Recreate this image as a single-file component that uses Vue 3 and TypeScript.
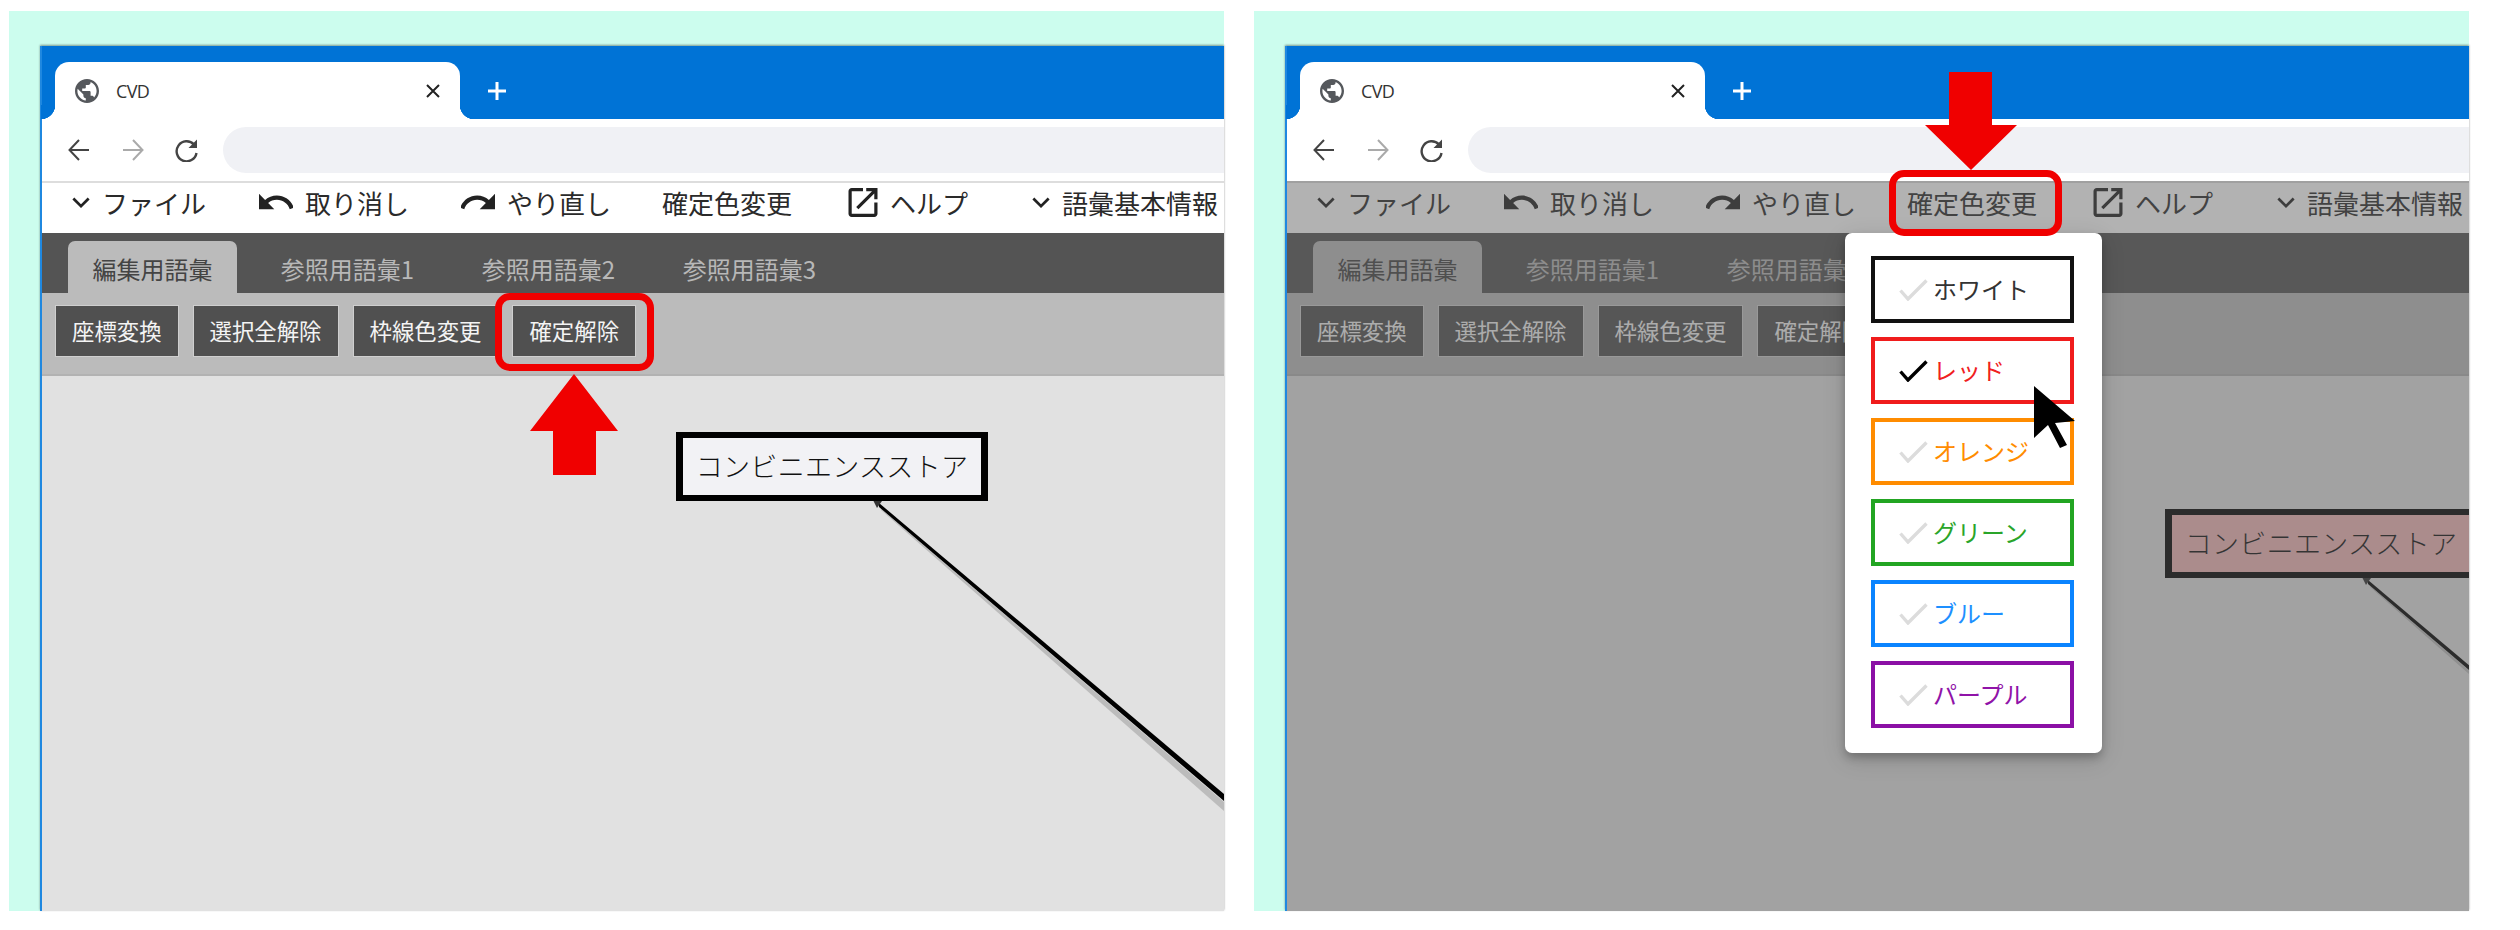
<script setup lang="ts">
interface Panel {
  id: string
  dimmed: boolean
  boxLeft: number
  boxTop: number
  boxFill: string
}

const panels: Panel[] = [
  { id: 'before', dimmed: false, boxLeft: 634, boxTop: 56, boxFill: '#f2f2f5' },
  { id: 'after', dimmed: true, boxLeft: 878, boxTop: 133, boxFill: '#f2b7b7' },
]

const subTabs = ['参照用語彙1', '参照用語彙2', '参照用語彙3']
const actions = ['座標変換', '選択全解除', '枠線色変更', '確定解除']

const colors = [
  { label: 'ホワイト', border: '#111111', text: '#333333', checked: false },
  { label: 'レッド', border: '#f01c1c', text: '#f02020', checked: true },
  { label: 'オレンジ', border: '#ff8c00', text: '#ff8c00', checked: false },
  { label: 'グリーン', border: '#22a522', text: '#2aa52a', checked: false },
  { label: 'ブルー', border: '#0a84ff', text: '#1e90ff', checked: false },
  { label: 'パープル', border: '#8b10a5', text: '#9013a8', checked: false },
]

// 引き出し線はボックス左下からの相対座標で、先端に向かって細くなる
function leaderLine(p: Panel) {
  const x = p.boxLeft + 197
  const y = p.boxTop + 68
  return `${x + 6},${y + 3} ${x + 6},${y + 7} ${x + 351},${y + 301} ${x + 351},${y + 294}`
}
function leaderShadow(p: Panel) {
  const x = p.boxLeft + 197
  const y = p.boxTop + 68
  return `${x + 8},${y + 9} ${x + 8},${y + 10} ${x + 351},${y + 311} ${x + 351},${y + 302}`
}
function leaderHead(p: Panel) {
  const x = p.boxLeft + 197
  const y = p.boxTop + 68
  return `${x},${y} ${x + 9},${y + 1} ${x + 4},${y + 8}`
}
</script>

<template>
  <div class="page">
    <section v-for="panel in panels" :key="panel.id" class="panel">
      <div class="window">
        <div class="tabstrip">
          <div class="browser-tab">
            <svg class="globe" viewBox="2 2 20 20">
              <path fill="#55585c" d="M12 2C6.48 2 2 6.48 2 12s4.48 10 10 10 10-4.48 10-10S17.52 2 12 2zm-1 17.93c-3.95-.49-7-3.85-7-7.93 0-.62.08-1.21.21-1.79L9 15v1c0 1.1.9 2 2 2v1.93zm6.9-2.54c-.26-.81-1-1.39-1.9-1.39h-1v-3c0-.55-.45-1-1-1H8v-2h2c.55 0 1-.45 1-1V7h2c1.1 0 2-.9 2-2v-.41c2.93 1.19 5 4.06 5 7.41 0 2.08-.8 3.97-2.1 5.39z" />
            </svg>
            <span class="tab-title">CVD</span>
            <svg class="tab-close" viewBox="0 0 14 14">
              <path d="M1 1L13 13M13 1L1 13" stroke="#222" stroke-width="2" />
            </svg>
          </div>
          <svg class="new-tab" viewBox="0 0 20 20">
            <path d="M10 1V19M1 10H19" stroke="#fff" stroke-width="3" />
          </svg>
        </div>

        <div class="toolbar">
          <svg class="nav-icon" viewBox="0 0 24 24">
            <path d="M22 12H3M12 2L2.5 12L12 22" fill="none" stroke="#444" stroke-width="2" />
          </svg>
          <svg class="nav-icon" viewBox="0 0 24 24">
            <path d="M2 12H21M12 2L21.5 12L12 22" fill="none" stroke="#aaa" stroke-width="2" />
          </svg>
          <svg class="nav-icon" viewBox="0 0 24 24">
            <path d="M19 6.5A10 10 0 1 0 21.5 15" fill="none" stroke="#444" stroke-width="2.4" />
            <path d="M22 1.5V10H13.5Z" fill="#444" />
          </svg>
          <div class="address"></div>
        </div>

        <div class="menubar">
          <div class="menu-item">
            <svg class="chevron" viewBox="0 0 20 12"><path d="M1.5 1.5L10 10L18.5 1.5" fill="none" stroke="#222" stroke-width="3" /></svg>
            <span>ファイル</span>
          </div>
          <div class="menu-item">
            <svg class="undo" viewBox="2 6.6 20 11"><path fill="#222" d="M12.5 8c-2.65 0-5.05.99-6.9 2.6L2 7v9h9l-3.62-3.62c1.39-1.16 3.16-1.88 5.12-1.88 3.54 0 6.55 2.31 7.6 5.5l2.37-.78C21.08 11.03 17.15 8 12.5 8z" /></svg>
            <span>取り消し</span>
          </div>
          <div class="menu-item">
            <svg class="undo" viewBox="2 6.6 20 11"><path fill="#222" d="M18.4 10.6C16.55 8.99 14.15 8 11.5 8c-4.65 0-8.58 3.03-9.96 7.22L3.9 16c1.05-3.19 4.05-5.5 7.6-5.5 1.95 0 3.73.72 5.12 1.88L13 16h9V7l-3.6 3.6z" /></svg>
            <span>やり直し</span>
          </div>
          <div class="menu-item">
            <span>確定色変更</span>
          </div>
          <div class="menu-item">
            <svg class="help" viewBox="3 3 18 18"><path fill="#222" d="M19 19H5V5h7V3H5c-1.11 0-2 .9-2 2v14c0 1.1.89 2 2 2h14c1.1 0 2-.9 2-2v-7h-2v7zM14 3v2h3.59l-9.83 9.83 1.41 1.41L19 6.41V10h2V3h-7z" /></svg>
            <span>ヘルプ</span>
          </div>
          <div class="menu-item">
            <svg class="chevron" viewBox="0 0 20 12"><path d="M1.5 1.5L10 10L18.5 1.5" fill="none" stroke="#222" stroke-width="3" /></svg>
            <span>語彙基本情報</span>
          </div>
        </div>

        <div class="subtabs">
          <div class="subtab active">編集用語彙</div>
          <div v-for="t in subTabs" :key="t" class="subtab">{{ t }}</div>
        </div>

        <div class="actions">
          <button v-for="a in actions" :key="a" class="action" type="button">{{ a }}</button>
        </div>

        <div class="canvas">
          <svg class="leader" width="1182" height="535">
            <polygon :points="leaderShadow(panel)" fill="#bcbcbc" />
            <polygon :points="leaderLine(panel)" fill="#000" />
            <polygon :points="leaderHead(panel)" fill="#333" />
          </svg>
          <div
            class="term-box"
            :style="{ left: panel.boxLeft + 'px', top: panel.boxTop + 'px', background: panel.boxFill }"
          >コンビニエンスストア</div>
        </div>

        <template v-if="panel.dimmed">
          <div class="scrim"></div>
          <div class="dropdown">
            <div
              v-for="c in colors"
              :key="c.label"
              class="color-item"
              :style="{ borderColor: c.border, color: c.text }"
            >
              <svg class="check" viewBox="0 0 29 22">
                <path d="M1.5 11.5L9 20L27.5 1.5" fill="none" :stroke="c.checked ? '#000' : '#dcdcdc'" stroke-width="3.4" />
              </svg>
              <span class="color-label">{{ c.label }}</span>
            </div>
          </div>
          <svg class="cursor" viewBox="0 0 41 62">
            <polygon points="0,0 41,35 21,37 33,59 26,62 14,39 0,52" fill="#000" />
          </svg>
          <div class="callout callout-menu"></div>
          <svg class="arrow arrow-down" viewBox="0 0 92 98">
            <polygon points="24,0 67,0 67,53 92,53 46,98 0,53 24,53" fill="#f00000" />
          </svg>
        </template>
        <template v-else>
          <div class="callout callout-action"></div>
          <svg class="arrow arrow-up" viewBox="0 0 88 101">
            <polygon points="44,0 88,57 66,57 66,101 23,101 23,57 0,57" fill="#f00000" />
          </svg>
        </template>
      </div>
    </section>
  </div>
</template>

<style scoped>
.page {
  display: flex;
  gap: 30px;
  width: 2520px;
  height: 930px;
  box-sizing: border-box;
  padding: 11px 0 19px 9px;
  overflow: hidden;
  background: #fff;
  font-family: "Noto Sans CJK JP", "Noto Sans", sans-serif;
  color: #2a2a2a;
}

.panel {
  width: 1215px;
  height: 900px;
  box-sizing: border-box;
  padding: 35px 0 0 31px;
  background: #ccfdee;
}

.window {
  position: relative;
  display: flex;
  flex-direction: column;
  height: 100%;
  border-left: 2px solid #1f88e0;
  background: #fff;
  box-shadow: 0 -1px 2px rgba(0, 0, 0, 0.4);
}

.tabstrip {
  display: flex;
  align-items: flex-end;
  height: 73px;
  flex: none;
  box-sizing: border-box;
  padding-left: 13px;
  background: #0073d6;
}

.browser-tab {
  position: relative;
  display: flex;
  align-items: center;
  width: 405px;
  height: 57px;
  box-sizing: border-box;
  padding: 0 20px;
  background: #fff;
  border-radius: 14px 14px 0 0;
}

.browser-tab::before,
.browser-tab::after {
  content: "";
  position: absolute;
  bottom: 0;
  width: 14px;
  height: 14px;
}

.browser-tab::before {
  left: -14px;
  background: radial-gradient(circle at 0 0, #0073d6 14px, #fff 14.5px);
}

.browser-tab::after {
  right: -14px;
  background: radial-gradient(circle at 100% 0, #0073d6 14px, #fff 14.5px);
}

.globe {
  width: 24px;
  height: 24px;
  flex: none;
}

.tab-title {
  margin-left: 17px;
  font-family: "Open Sans", sans-serif;
  font-size: 18px;
  letter-spacing: -0.6px;
  color: #333;
}

.tab-close {
  width: 14px;
  height: 14px;
  margin-left: auto;
}

.new-tab {
  width: 20px;
  height: 20px;
  margin: 0 0 18px 27px;
}

.toolbar {
  display: flex;
  align-items: center;
  gap: 30px;
  height: 62px;
  flex: none;
  box-sizing: border-box;
  padding-left: 25px;
}

.nav-icon {
  width: 24px;
  height: 24px;
  flex: none;
}

.address {
  flex: 1;
  height: 46px;
  margin-left: -6px;
  border-radius: 23px 0 0 23px;
  background: #f0f1f5;
}

.menubar {
  display: flex;
  align-items: center;
  gap: 52px;
  height: 52px;
  flex: none;
  box-sizing: border-box;
  padding: 0 0 11px 30px;
  border-top: 2px solid #dddddd;
  font-size: 26px;
  white-space: nowrap;
}

.menu-item {
  display: flex;
  align-items: center;
  gap: 12px;
  line-height: 1;
}

.menu-item:first-child {
  margin-right: 1px;
}

.menu-item:nth-child(4) {
  margin-left: -1px;
}

.menu-item:nth-child(5) {
  margin-left: 4px;
}

.menu-item:nth-child(6) {
  margin-left: 12px;
}

.chevron {
  width: 18px;
  height: 11px;
  flex: none;
}

.undo {
  width: 34px;
  height: 19px;
  flex: none;
}

.help {
  width: 30px;
  height: 29px;
  flex: none;
}

.subtabs {
  display: flex;
  align-items: flex-end;
  height: 60px;
  flex: none;
  box-sizing: border-box;
  padding-left: 26px;
  background: #545454;
  font-size: 24px;
}

.subtab {
  display: flex;
  align-items: center;
  justify-content: center;
  width: 201px;
  height: 52px;
  box-sizing: border-box;
  padding-top: 2px;
  color: #b8b8b8;
  white-space: nowrap;
}

.subtab.active {
  width: 169px;
  margin-right: 10px;
  border-radius: 7px 7px 0 0;
  background: #bbbbbb;
  color: #444;
}

.actions {
  display: flex;
  align-items: flex-start;
  gap: 14px;
  height: 83px;
  flex: none;
  box-sizing: border-box;
  padding: 12px 0 0 13px;
  border-bottom: 2px solid #b2b2b2;
  background: #bbbbbb;
}

.action {
  height: 52px;
  padding: 0 16px 2px;
  border: 1px solid #cfcfcf;
  background: #505050;
  color: #f4f4f4;
  font-family: inherit;
  font-size: 22.4px;
  white-space: nowrap;
}

.canvas {
  position: relative;
  flex: 1;
  overflow: hidden;
  background: #e1e1e1;
}

.leader {
  position: absolute;
  left: 0;
  top: 0;
}

.term-box {
  position: absolute;
  display: flex;
  align-items: center;
  justify-content: center;
  width: 312px;
  height: 69px;
  box-sizing: border-box;
  padding-bottom: 2px;
  border-style: solid;
  border-color: #000;
  border-width: 6px 7px;
  font-size: 27px;
  letter-spacing: 0.3px;
  font-weight: 300;
  white-space: nowrap;
  color: #111;
}

.scrim {
  position: absolute;
  left: 0;
  right: 0;
  top: 135px;
  bottom: 0;
  background: rgba(92, 92, 92, 0.475);
}

.dropdown {
  position: absolute;
  left: 558px;
  top: 187px;
  display: flex;
  flex-direction: column;
  gap: 14px;
  width: 257px;
  box-sizing: border-box;
  padding: 23px 28px 25px 26px;
  border-radius: 7px;
  background: #fff;
  box-shadow: 0 5px 8px rgba(0, 0, 0, 0.22), 0 6px 24px rgba(0, 0, 0, 0.14);
}

.color-item {
  display: flex;
  align-items: center;
  gap: 5px;
  height: 67px;
  box-sizing: border-box;
  padding-left: 24px;
  border: 4px solid;
  font-size: 24px;
  white-space: nowrap;
}

.color-label {
  padding-bottom: 3px;
}

.check {
  width: 29px;
  height: 22px;
  flex: none;
}

.cursor {
  position: absolute;
  left: 747px;
  top: 340px;
  width: 41px;
  height: 62px;
}

.callout {
  position: absolute;
  box-sizing: border-box;
  border: 7px solid #f00000;
  border-radius: 15px;
}

.callout-action {
  left: 453px;
  top: 247px;
  width: 159px;
  height: 78px;
}

.callout-menu {
  left: 602px;
  top: 124px;
  width: 173px;
  height: 66px;
}

.arrow {
  position: absolute;
}

.arrow-up {
  left: 488px;
  top: 328px;
  width: 88px;
  height: 101px;
}

.arrow-down {
  left: 638px;
  top: 26px;
  width: 92px;
  height: 98px;
}
</style>

<style>
html,
body {
  margin: 0;
  background: #fff;
}
</style>
